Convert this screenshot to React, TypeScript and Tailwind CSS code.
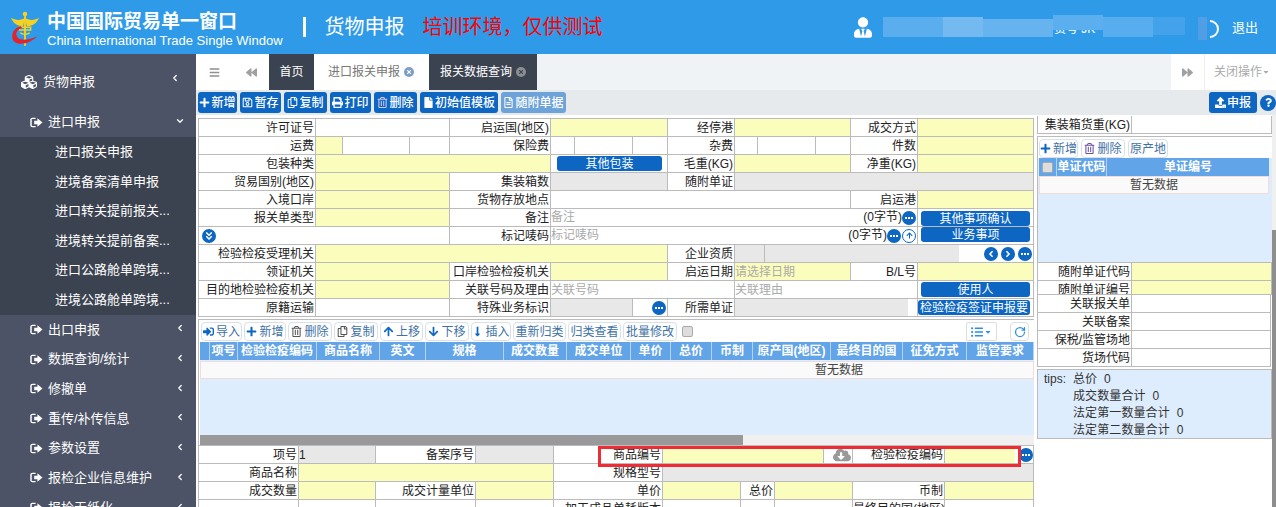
import type { ReactNode } from "react"
import { ChevronDown, ChevronLeft, RotateCw } from "lucide-react"
import {
  FaAngleDoubleDown,
  FaAngleLeft,
  FaAngleRight,
  FaArrowDown,
  FaArrowUp,
  FaBackward,
  FaBars,
  FaCaretDown,
  FaCubes,
  FaForward,
  FaListUl,
  FaLongArrowAltDown,
  FaPlus,
  FaPrint,
  FaQuestion,
  FaRegCopy,
  FaRegFileAlt,
  FaRegSave,
  FaRegTrashAlt,
  FaSignInAlt,
  FaTimes,
  FaUpload,
  FaUserTie,
  FaFile,
  FaCloudDownloadAlt,
} from "react-icons/fa"

const cell = "h-[18px] border-r border-b border-[#bbb] text-[12px] leading-[19px] overflow-hidden whitespace-nowrap text-[#222]"

function L({ c = "", children }: { c?: string; children?: ReactNode }) {
  return <div className={`${cell} bg-white text-right pr-[1px] ${c}`}>{children}</div>
}
function Y({ c = "", children }: { c?: string; children?: ReactNode }) {
  return <div className={`${cell} bg-[#fbfdbc] text-[#aaa] ${c}`}>{children}</div>
}
function W({ c = "", children }: { c?: string; children?: ReactNode }) {
  return <div className={`${cell} bg-white ${c}`}>{children}</div>
}
function G({ c = "", children }: { c?: string; children?: ReactNode }) {
  return <div className={`${cell} bg-[#e8e8e8] ${c}`}>{children}</div>
}

function Dots({ c = "" }: { c?: string }) {
  return (
    <span className={`inline-flex h-[14px] w-[14px] shrink-0 items-center justify-center gap-[1px] rounded-full bg-[#0c66c2] ${c}`}>
      <i className="h-[2px] w-[2px] bg-white" />
      <i className="h-[2px] w-[2px] bg-white" />
      <i className="h-[2px] w-[2px] bg-white" />
    </span>
  )
}

function Round({ children }: { children: ReactNode }) {
  return (
    <span className="inline-flex h-[14px] w-[14px] shrink-0 items-center justify-center rounded-full bg-[#0c66c2] text-[10px] text-white">
      {children}
    </span>
  )
}

function FormBtn({ c = "", children }: { c?: string; children: ReactNode }) {
  return (
    <div className={`h-[15px] overflow-hidden whitespace-nowrap rounded-[3px] bg-[#0c66c2] text-center text-[12px] leading-[17px] text-white ${c}`}>
      {children}
    </div>
  )
}

function BoxArrow() {
  return (
    <svg viewBox="0 0 14 12" className="h-[11px] w-[13px] shrink-0" fill="none">
      <path d="M6 1.5H2.5a1.5 1.5 0 0 0-1.5 1.5v6a1.5 1.5 0 0 0 1.5 1.5H6" stroke="white" strokeWidth="1.6" />
      <path d="M4.5 4.2H8V1.4L13.6 6 8 10.6V7.8H4.5z" fill="white" />
    </svg>
  )
}

function Logo() {
  return (
    <svg viewBox="0 0 30 38" className="h-[36px] w-[28px]">
      <path d="M15 7C11 10 5 10 0 7c2 5 6 9 13 9zM15 7c4 3 10 3 15 0-2 5-6 9-13 9z" fill="#f6d21f" />
      <rect x="14" y="2" width="2" height="35" fill="#f6d21f" />
      <circle cx="15" cy="3" r="2.4" fill="#f6d21f" />
      <path d="M9 17h12v3H9zM10 23c2 2 8 2 10 0" stroke="#f6d21f" strokeWidth="1.6" fill="none" />
      <path d="M10 16C2 18-1 27 3 32c5 5 17 3 25-5-7 3-16 5-20 2-4-4-3-9 4-11z" fill="#e2232b" />
    </svg>
  )
}

const sideItems = ["出口申报", "数据查询/统计", "修撤单", "重传/补传信息", "参数设置", "报检企业信息维护", "报检无纸化"]
const subItems = ["进口报关申报", "进境备案清单申报", "进口转关提前报关...", "进境转关提前备案...", "进口公路舱单跨境...", "进境公路舱单跨境..."]

function Sidebar() {
  return (
    <div className="h-full w-[196px] shrink-0 overflow-hidden bg-[#4c5366] text-[13px] text-white">
      <div className="flex h-[53px] items-center pl-[21px] pt-[2px]">
        <FaCubes className="mt-[1px] h-[16px] w-[16px]" />
        <span className="ml-[6px] flex-1">货物申报</span>
        <ChevronLeft className="mb-[8px] mr-[16px] h-[10px] w-[10px]" strokeWidth={3} />
      </div>
      <div className="flex h-[30px] items-center pl-[30px]">
        <BoxArrow />
        <span className="ml-[5px] flex-1">进口申报</span>
        <ChevronDown className="mb-[2px] mr-[11px] h-[10px] w-[10px]" strokeWidth={3} />
      </div>
      <div className="bg-[#3b4250]">
        {subItems.map((s) => (
          <div key={s} className="flex h-[29.6px] items-center pl-[55px]">
            {s}
          </div>
        ))}
      </div>
      {sideItems.map((s) => (
        <div key={s} className="flex h-[29.7px] items-center pl-[30px]">
          <BoxArrow />
          <span className="ml-[5px] flex-1">{s}</span>
          <ChevronLeft className="mb-[2px] mr-[11px] h-[10px] w-[10px]" strokeWidth={3} />
        </div>
      ))}
    </div>
  )
}

function Tabs() {
  return (
    <div className="flex h-[36px] bg-[#f0f3f5] text-[12px]">
      <div className="flex w-[37px] items-center justify-center bg-white text-[#8f8f8f]">
        <FaBars className="h-[11px] w-[11px]" />
      </div>
      <div className="flex w-[36px] items-center justify-center bg-white text-[#a0a0a0]">
        <FaBackward className="h-[11px] w-[11px]" />
      </div>
      <div className="flex w-[45px] items-center justify-center bg-[#3b4250] text-white">首页</div>
      <div className="flex w-[115px] items-center bg-white pl-[14px] text-[#777]">
        进口报关申报
        <span className="ml-[4px] flex h-[10px] w-[10px] items-center justify-center rounded-full bg-[#7e9ec9] text-white">
          <FaTimes className="h-[6px] w-[6px]" />
        </span>
      </div>
      <div className="flex w-[108px] items-center bg-[#3b4250] pl-[11px] text-white">
        报关数据查询
        <span className="ml-[4px] flex h-[10px] w-[10px] items-center justify-center rounded-full bg-[#8a8d93] text-[#3b4250]">
          <FaTimes className="h-[6px] w-[6px]" />
        </span>
      </div>
      <div className="flex-1" />
      <div className="flex w-[34px] items-center justify-center border-r border-[#eee] bg-white text-[#a0a0a0]">
        <FaForward className="h-[11px] w-[11px]" />
      </div>
      <div className="flex w-[71px] items-center bg-white pl-[9px] text-[#aaa]">
        关闭操作
        <FaCaretDown className="h-[8px] w-[8px]" />
      </div>
    </div>
  )
}

function Tool({ icon, c = "", children }: { icon: ReactNode; c?: string; children: ReactNode }) {
  return (
    <div className={`flex h-[21px] items-center justify-center gap-[1px] whitespace-nowrap rounded-[3px] bg-[#0c66c2] text-[12px] font-medium text-white ${c}`}>
      {icon}
      {children}
    </div>
  )
}

function Toolbar() {
  const ic = "h-[11px] w-[11px] shrink-0"
  return (
    <div className="flex h-[25px] items-center bg-[#e7eaed] pl-[2px] pr-0">
      <div className="flex gap-[3px]">
        <Tool c="w-[39px]" icon={<FaPlus className={ic} />}>新增</Tool>
        <Tool c="w-[41px]" icon={<FaRegSave className={ic} />}>暂存</Tool>
        <Tool c="w-[43px]" icon={<FaRegCopy className={ic} />}>复制</Tool>
        <Tool c="w-[41px]" icon={<FaPrint className={ic} />}>打印</Tool>
        <Tool c="w-[43px]" icon={<FaRegTrashAlt className={`${ic} text-[#d9c7ef]`} />}>删除</Tool>
        <Tool c="w-[78px]" icon={<FaFile className={ic} />}>初始值模板</Tool>
        <Tool c="w-[65px] !bg-[#6ea3da]" icon={<FaRegFileAlt className={ic} />}>随附单据</Tool>
      </div>
      <div className="ml-auto flex items-center gap-[3px]">
        <Tool c="w-[48px]" icon={<FaUpload className={ic} />}>申报</Tool>
        <div className="flex h-[16px] w-[16px] items-center justify-center rounded-full bg-[#0c66c2] text-white">
          <FaQuestion className="h-[9px] w-[9px]" />
        </div>
      </div>
    </div>
  )
}

function TopForm() {
  return (
    <div className="grid grid-cols-[117px_27px_67px_40px_101px_24px_58px_35px_67px_23px_7px_51px_35px_67px_116px] border-l border-t border-[#bbb]">
      <L>许可证号</L><W c="col-span-3" /><L>启运国(地区)</L><Y c="col-span-3" /><L>经停港</L><Y c="col-span-4" /><L>成交方式</L><Y />

      <L>运费</L><Y /><W /><W /><L>保险费</L><W /><W /><W /><L>杂费</L><W /><W c="col-span-2" /><W /><L>件数</L><Y />

      <L>包装种类</L><Y c="col-span-4" />
      <W c="col-span-3 pl-[6px] pr-[5px] pt-[1px]"><FormBtn>其他包装</FormBtn></W>
      <L>毛重(KG)</L><Y c="col-span-4" /><L>净重(KG)</L><Y />

      <L>贸易国别(地区)</L><Y c="col-span-3" /><L>集装箱数</L><G c="col-span-3" /><L>随附单证</L><G c="col-span-6" />

      <L>入境口岸</L><Y c="col-span-3" /><L>货物存放地点</L><W c="col-span-8" /><L>启运港</L><Y />

      <L>报关单类型</L><Y c="col-span-3" /><L>备注</L>
      <W c="col-span-9 flex items-center pr-[1px] text-[#aaa]">
        备注
        <span className="ml-auto text-[#222]">(0字节)</span>
        <Dots />
      </W>
      <W c="px-[3px] pt-[2px]"><FormBtn>其他事项确认</FormBtn></W>

      <W c="col-span-4 flex items-center pl-[3px]">
        <span className="flex h-[14px] w-[14px] items-center justify-center rounded-full bg-[#0c66c2] text-white">
          <FaAngleDoubleDown className="h-[10px] w-[10px]" />
        </span>
      </W>
      <L>标记唛码</L>
      <W c="col-span-9 flex items-center pr-[1px] text-[#aaa]">
        标记唛码
        <span className="ml-auto text-[#222]">(0字节)</span>
        <Dots c="mr-[1px]" />
        <span className="flex h-[14px] w-[14px] items-center justify-center rounded-full border border-[#0c66c2] text-[#0c66c2]">
          <FaArrowUp className="h-[7px] w-[7px]" />
        </span>
      </W>
      <W c="px-[3px]"><FormBtn>业务事项</FormBtn></W>

      <L>检验检疫受理机关</L><Y c="col-span-7" /><L>企业资质</L>
      <W c="col-span-6 flex">
        <div className="w-[30px] border-r border-[#bbb] bg-[#e8e8e8]" />
        <div className="w-[194px] bg-[#e8e8e8]" />
        <div className="ml-auto flex items-center gap-[3px] pr-[1px]">
          <Round><FaAngleLeft /></Round>
          <Round><FaAngleRight /></Round>
          <Dots />
        </div>
      </W>

      <L>领证机关</L><Y c="col-span-3" /><L>口岸检验检疫机关</L><Y c="col-span-3" /><L>启运日期</L><Y c="col-span-4">请选择日期</Y><L>B/L号</L><Y />

      <L>目的地检验检疫机关</L><Y c="col-span-3" /><L>关联号码及理由</L>
      <W c="col-span-4 text-[#aaa]">关联号码</W>
      <W c="col-span-5 text-[#aaa]">关联理由</W>
      <W c="px-[3px] pt-[1px]"><FormBtn>使用人</FormBtn></W>

      <L>原籍运输</L><W c="col-span-3" /><L>特殊业务标识</L><G c="col-span-2" />
      <W c="flex items-center justify-end pr-[1px]"><Dots /></W>
      <L>所需单证</L>
      <W c="col-span-5"><div className="h-full w-[173px] bg-[#e8e8e8]" /></W>
      <W c="pr-[3px] pt-[1px]"><FormBtn>检验检疫签证申报要</FormBtn></W>
    </div>
  )
}

function Ghost({ icon, c = "", children }: { icon?: ReactNode; c?: string; children: ReactNode }) {
  return (
    <div className={`flex h-[19px] shrink-0 items-center justify-center gap-[2px] whitespace-nowrap rounded-[4px] border border-[#d8e1ea] bg-white text-[12px] text-[#3f72a6] ${c}`}>
      {icon}
      {children}
    </div>
  )
}

const goodsCols = [
  ["", "w-[10px]"],
  ["项号", "w-[28px]"],
  ["检验检疫编码", "w-[79px]"],
  ["商品名称", "w-[63px]"],
  ["英文", "w-[46px]"],
  ["规格", "w-[78px]"],
  ["成交数量", "w-[63px]"],
  ["成交单位", "w-[64px]"],
  ["单价", "w-[40px]"],
  ["总价", "w-[41px]"],
  ["币制", "w-[41px]"],
  ["原产国(地区)", "w-[78px]"],
  ["最终目的国", "w-[72px]"],
  ["征免方式", "w-[64px]"],
  ["监管要求", "w-[67px]"],
]

function GoodsPanel() {
  const ic = "h-[11px] w-[11px] shrink-0 text-[#0c66c2]"
  return (
    <div className="mt-[2px] h-[126px] overflow-hidden border-l border-t border-[#bbb] pl-[1px]">
      <div className="flex h-[22px] items-center gap-[2px] pl-[1px] pt-[1px]">
        <Ghost c="w-[41px]" icon={<FaSignInAlt className={ic} />}>导入</Ghost>
        <Ghost c="w-[42px]" icon={<FaPlus className={ic} />}>新增</Ghost>
        <Ghost c="w-[44px]" icon={<FaRegTrashAlt className="h-[11px] w-[11px] shrink-0 text-[#555]" />}>删除</Ghost>
        <Ghost c="w-[44px]" icon={<FaRegCopy className="h-[11px] w-[11px] shrink-0 text-[#555]" />}>复制</Ghost>
        <Ghost c="w-[43px]" icon={<FaArrowUp className={ic} />}>上移</Ghost>
        <Ghost c="w-[44px]" icon={<FaArrowDown className={ic} />}>下移</Ghost>
        <Ghost c="w-[40px]" icon={<FaLongArrowAltDown className={ic} />}>插入</Ghost>
        <Ghost c="w-[53px]">重新归类</Ghost>
        <Ghost c="w-[53px]">归类查看</Ghost>
        <Ghost c="w-[54px]">批量修改</Ghost>
        <div className="ml-[3px] h-[11px] w-[11px] rounded-[2px] border border-[#aaa] bg-[#ddd]" />
        <div className="ml-auto mr-[11px] flex h-[19px] w-[31px] items-center justify-center rounded-[2px] border border-[#ddd] text-[#2f8fe0]">
          <FaListUl className="h-[12px] w-[12px]" />
          <FaCaretDown className="ml-[1px] h-[8px] w-[8px]" />
        </div>
        <div className="mr-[5px] flex h-[19px] w-[19px] items-center justify-center rounded-[4px] border border-[#ddd] text-[#2f8fe0]">
          <RotateCw className="h-[12px] w-[12px]" strokeWidth={2.5} />
        </div>
      </div>
      <div className="flex h-[18px] w-[834px] bg-[#62a4e8] text-[12px] font-bold leading-[18px] text-white">
        {goodsCols.map(([t, w]) => (
          <div key={t} className={`${w} shrink-0 overflow-hidden whitespace-nowrap border-r border-[#b5d3f3] text-center`}>
            {t}
          </div>
        ))}
      </div>
      <div className="flex h-[75px] flex-col bg-[#deedfd] pt-[1px]">
        <div className="h-[18px] border border-[#f0dcdc] bg-[#fafafa] pl-[614px] text-[12px] leading-[17px] text-[#444]">暂无数据</div>
      </div>
      <div className="h-[10px] bg-[#f0f0f0]">
        <div className="h-full w-[543px] bg-[#999]" />
      </div>
    </div>
  )
}

function BottomForm() {
  return (
    <div className="grid grid-cols-[100px_77px_100px_78px_109px_78px_34px_49px_29px_92px_89px] border-l border-t border-[#bbb]">
      <L>项号</L><G>1</G><L>备案序号</L><G /><L>商品编号</L><Y c="col-span-3" />
      <W c="flex items-center justify-end pr-[1px] text-[#999]"><FaCloudDownloadAlt className="h-[16px] w-[18px]" /></W>
      <L>检验检疫编码</L>
      <W c="flex items-center">
        <div className="h-full w-[71px] bg-[#fbfdbc]" />
        <Dots c="ml-[4px]" />
      </W>

      <L>商品名称</L><Y c="col-span-3" /><L>规格型号</L><G c="col-span-6" />

      <L>成交数量</L><Y /><L>成交计量单位</L><Y /><L>单价</L><Y /><L>总价</L><Y c="col-span-2" /><L>币制</L><Y />

      <L /><W /><L /><W /><L>加工成品单耗版本</L><W /><W /><W c="col-span-2" /><L>最终目的国(地区)</L><W />
    </div>
  )
}

function RightPanel() {
  const ic = "h-[11px] w-[11px] shrink-0"
  return (
    <div className="w-[235px] shrink-0 pt-[1px]">
      <div className="flex h-[18px] border-b border-l border-r border-[#bbb] text-[12px] leading-[18px] text-[#222]">
        <div className="w-[94px] border-r border-[#bbb] pr-[1px] text-right">集装箱货重(KG)</div>
      </div>
      <div className="mt-[2px] h-[126px] border-l border-t border-[#bbb]">
        <div className="flex h-[21px] items-center gap-[3px] pl-[1px] pt-[2px]">
          <Ghost c="w-[39px]" icon={<FaPlus className={`${ic} text-[#0c66c2]`} />}>新增</Ghost>
          <Ghost c="w-[44px]" icon={<FaRegTrashAlt className={`${ic} text-[#6a4fa3]`} />}>删除</Ghost>
          <Ghost c="w-[40px]">原产地</Ghost>
        </div>
        <div className="flex h-[18px] bg-[#deedfd] pl-[1px] pr-[3px] text-[12px] font-bold leading-[18px] text-white">
          <div className="flex w-[18px] items-center justify-center border-r border-[#b5d3f3] bg-[#62a4e8]">
            <i className="h-[11px] w-[11px] rounded-[2px] border border-[#aaa] bg-[#ddd]" />
          </div>
          <div className="w-[50px] border-r border-[#b5d3f3] bg-[#62a4e8] text-center">单证代码</div>
          <div className="flex-1 bg-[#62a4e8] text-center">单证编号</div>
        </div>
        <div className="h-[86px] bg-[#deedfd] pl-[1px] pr-[3px]">
          <div className="h-[18px] border border-[#f0dcdc] bg-[#fafafa] text-center text-[12px] leading-[17px] text-[#444]">暂无数据</div>
        </div>
      </div>
      <div className="grid grid-cols-[94px_1fr] border-l border-t border-[#bbb]">
        <L>随附单证代码</L><Y />
        <L c="!h-[14px]">随附单证编号</L><Y c="!h-[14px]" />
      </div>
      <div className="mr-[1px] grid grid-cols-[94px_1fr] border-l border-[#bbb]">
        <L>关联报关单</L><W />
        <L>关联备案</L><W />
        <L>保税/监管场地</L><W />
        <L>货场代码</L><W />
      </div>
      <div className="mt-[2px] grid h-[70px] grid-cols-[29px_1fr] border border-[#bbb] bg-[#deedfd] pl-[6px] pt-[1px] text-[12px] leading-[17px] text-[#333]">
        <div>tips:</div>
        <div className="tracking-[0.1px]">
          <div>总价&nbsp;&nbsp;0</div>
          <div>成交数量合计&nbsp;&nbsp;0</div>
          <div>法定第一数量合计&nbsp;&nbsp;0</div>
          <div>法定第二数量合计&nbsp;&nbsp;0</div>
        </div>
      </div>
    </div>
  )
}

function Header() {
  return (
    <div className="relative flex h-[54px] shrink-0 items-center overflow-hidden bg-[#2f9be8] text-white">
      <div className="ml-[11px] mt-[3px]"><Logo /></div>
      <div className="ml-[8px] mt-[5px] flex flex-col">
        <div className="text-[19px] font-bold leading-[22px]">中国国际贸易单一窗口</div>
        <div className="text-[13px] leading-[16px]">China International Trade Single Window</div>
      </div>
      <div className="ml-[20px] h-[20px] w-[3px] bg-white" />
      <div className="ml-[19px] text-[20px]">货物申报</div>
      <div className="ml-[18px] text-[20px] text-[#f00]">培训环境，仅供测试</div>
      <FaUserTie className="absolute left-[854px] top-[17px] h-[21px] w-[18px]" />
      <span className="absolute left-[1054px] top-[20px] text-[12px]">货号 JK</span>
      {/* blurred-out user name */}
      <div className="absolute left-[883px] top-[17px] h-[20px] w-[60px] bg-[#5aaeee]" />
      <div className="absolute left-[943px] top-[17px] h-[20px] w-[40px] bg-[#74baf0]" />
      <div className="absolute left-[983px] top-[19px] h-[18px] w-[70px] bg-[#66b3ef]" />
      <div className="absolute left-[1053px] top-[15px] h-[15px] w-[50px] bg-[#5cafee]" />
      <div className="absolute left-[1103px] top-[17px] h-[20px] w-[50px] bg-[#58adee]" />
      <div className="absolute left-[1153px] top-[17px] h-[18px] w-[32px] bg-[#43a2e9]" />
      <svg viewBox="0 0 14 22" className="absolute left-[1205px] top-[18px] h-[22px] w-[14px]" fill="none">
        <path d="M5 3a8 8 0 0 1 0 16" stroke="white" strokeWidth="2" />
      </svg>
      <div className="absolute left-[1198px] top-[17px] h-[23px] w-[9px] bg-[#509fe6]" />
      <div className="absolute left-[1232px] top-[18px] text-[13px]">退出</div>
    </div>
  )
}

export default function App() {
  return (
    <div className="flex h-[507px] w-[1276px] flex-col overflow-hidden bg-white [font-family:'Liberation_Sans','Noto_Sans_CJK_SC',sans-serif]">
      <Header />
      <div className="relative flex min-h-0 flex-1">
        <Sidebar />
        <div className="flex min-w-0 flex-1 flex-col">
          <Tabs />
          <Toolbar />
          <div className="flex min-h-0 flex-1">
            <div className="w-[841px] shrink-0 pl-[2px] pr-[3px] pt-[3px]">
              <TopForm />
              <GoodsPanel />
              <BottomForm />
            </div>
            <RightPanel />
            <div className="flex-1 bg-[#f0f0f0]">
              <div className="mt-[115px] h-full bg-[#8e8e8e]" />
            </div>
          </div>
        </div>
        {/* red mark around the goods code fields */}
        <div className="absolute left-[598px] top-[392px] h-[21px] w-[423px] border-[3px] border-[#ee2c35]" />
      </div>
    </div>
  )
}
